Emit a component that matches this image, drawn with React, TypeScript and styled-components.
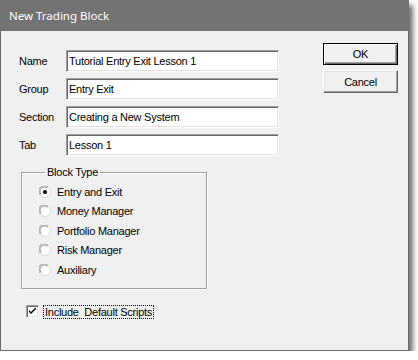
import React, { useState } from 'react';
import styled, { createGlobalStyle } from 'styled-components';

const GlobalStyle = createGlobalStyle`
    body {
        margin: 0;
        background: #ffffff;
    }
`;

const Window = styled.div`
    width: 409px;
    height: 351px;
    box-sizing: border-box;
    border: 1px solid #6c6c6c;
    border-top: none;
    background: #f0f0f0;
    box-shadow: 4px 5px 5px rgba(0, 0, 0, 0.55);
    display: flex;
    flex-direction: column;
    font-family: "Liberation Sans", Arial, sans-serif;
    font-size: 11px;
    letter-spacing: -0.25px;
    color: #000;
`;

const TitleBar = styled.div`
    height: 31px;
    margin: 0 -1px;
    background: #737373;
    color: #ffffff;
    font-family: "Noto Sans", "Open Sans", sans-serif;
    font-size: 11.5px;
    letter-spacing: 0;
    display: flex;
    align-items: center;
    padding-left: 9px;
`;

const Body = styled.div`
    display: flex;
    padding: 12px 10px 0 18px;
`;

const LeftColumn = styled.div`
    display: flex;
    flex-direction: column;
    padding-top: 7px;
`;

const Fields = styled.div`
    display: grid;
    grid-template-columns: 47px 213px;
    grid-auto-rows: 22px;
    row-gap: 6px;
    align-items: center;
`;

const Label = styled.label`
    line-height: 22px;
`;

const TextBox = styled.input`
    box-sizing: border-box;
    height: 22px;
    width: 100%;
    margin: 0;
    padding: 0 2px;
    border: 1px solid;
    border-color: #a0a0a0 #ffffff #ffffff #a0a0a0;
    box-shadow: inset 1px 1px 0 #696969, inset -1px -1px 0 #e3e3e3;
    background: #ffffff;
    font-family: inherit;
    font-size: inherit;
    letter-spacing: inherit;
    color: #000;
    outline: none;
`;

const GroupBox = styled.fieldset`
    box-sizing: border-box;
    width: 186px;
    height: 124px;
    margin: 9px 0 0 2px;
    padding: 3px 0 0 17px;
    border: 1px solid #a0a0a0;
    box-shadow: inset 1px 1px 0 #ffffff, 1px 1px 0 #ffffff;
    min-width: 0;
`;

const Legend = styled.legend`
    margin-left: 6px;
    padding: 0 2px;
    line-height: 14px;
`;

const RadioRow = styled.label`
    display: flex;
    align-items: center;
    gap: 6px;
    height: 19.5px;
`;

const CheckRow = styled.label`
    display: flex;
    align-items: center;
    gap: 4px;
    height: 13px;
    margin: 16px 0 0 7px;
`;

const CheckBox = styled.span`
    box-sizing: border-box;
    width: 13px;
    height: 13px;
    border: 1px solid;
    border-color: #a0a0a0 #ffffff #ffffff #a0a0a0;
    box-shadow: inset 1px 1px 0 #696969, inset -1px -1px 0 #e3e3e3;
    background: #ffffff;
    display: flex;
    align-items: center;
    justify-content: center;
`;

const FocusText = styled.span`
    border: 1px dotted #000;
    padding: 0 1px;
    line-height: 12px;
    white-space: pre;
`;

const ButtonColumn = styled.div`
    margin-left: auto;
    display: flex;
    flex-direction: column;
    gap: 5px;
`;

const Button = styled.button<{ $default?: boolean }>`
    box-sizing: border-box;
    width: 75px;
    height: ${(p) => (p.$default ? '22px' : '23px')};
    margin: 0;
    padding: 0;
    background: #f0f0f0;
    border: 1px solid;
    border-color: ${(p) => (p.$default ? '#000' : '#ffffff #696969 #696969 #ffffff')};
    box-shadow: ${(p) =>
        p.$default
            ? 'inset 1px 1px 0 #ffffff, inset -1px -1px 0 #696969, inset -2px -2px 0 #a0a0a0'
            : 'inset -1px -1px 0 #a0a0a0, inset 1px 1px 0 #e3e3e3'};
    font-family: inherit;
    font-size: 11px;
    letter-spacing: inherit;
    color: #000;
`;

const RadioMark = ({ checked }: { checked: boolean }) => (
    <svg width="12" height="12" viewBox="0 0 12 12">
        <circle cx="6" cy="6" r="5.5" fill="#ffffff" stroke="#d8d8d8" />
        <path d="M1.2 9 A5 5 0 0 1 9 1.2" fill="none" stroke="#a8a8a8" strokeWidth="1" />
        <path d="M2.2 8.4 A4.2 4.2 0 0 1 8.4 2.2" fill="none" stroke="#909090" strokeWidth="1" />
        {checked && <circle cx="6" cy="6" r="2" fill="#000" />}
    </svg>
);

const blockTypes = ['Entry and Exit', 'Money Manager', 'Portfolio Manager', 'Risk Manager', 'Auxiliary'];

const fields = [
    { label: 'Name', value: 'Tutorial Entry Exit Lesson 1' },
    { label: 'Group', value: 'Entry Exit' },
    { label: 'Section', value: 'Creating a New System' },
    { label: 'Tab', value: 'Lesson 1' },
];

export default function App() {
    const [type, setType] = useState(0);

    return (
        <>
            <GlobalStyle />
            <Window>
                <TitleBar>New Trading Block</TitleBar>
                <Body>
                    <LeftColumn>
                        <Fields>
                            {fields.map((f) => (
                                <React.Fragment key={f.label}>
                                    <Label>{f.label}</Label>
                                    <TextBox defaultValue={f.value} />
                                </React.Fragment>
                            ))}
                        </Fields>
                        <GroupBox>
                            <Legend>Block Type</Legend>
                            {blockTypes.map((t, i) => (
                                <RadioRow key={t} onClick={() => setType(i)}>
                                    <RadioMark checked={type === i} />
                                    {t}
                                </RadioRow>
                            ))}
                        </GroupBox>
                        <CheckRow>
                            <CheckBox>
                                <svg width="7" height="7" viewBox="0 0 7 7">
                                    <path d="M0 2 L0 4 L2 6 L7 1 L7 -1 L2 4 Z" fill="#000" />
                                </svg>
                            </CheckBox>
                            <FocusText>Include  Default Scripts</FocusText>
                        </CheckRow>
                    </LeftColumn>
                    <ButtonColumn>
                        <Button $default>OK</Button>
                        <Button>Cancel</Button>
                    </ButtonColumn>
                </Body>
            </Window>
        </>
    );
}
